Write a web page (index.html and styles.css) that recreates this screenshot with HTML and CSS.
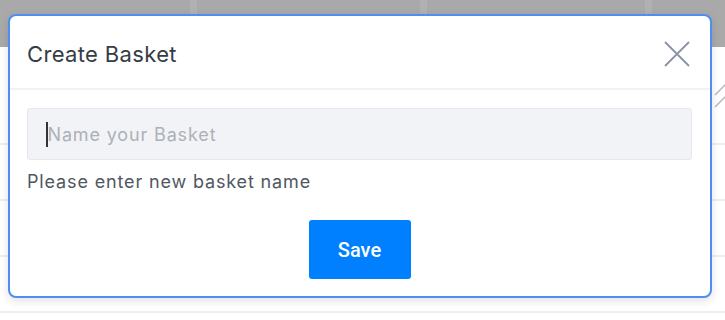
FILE: index.html
```html
<!DOCTYPE html>
<html>
<head>
<meta charset="utf-8">
<link rel="stylesheet" href="styles.css">
</head>
<body>
<div class="page">
  <div class="thead">
    <div class="th"></div>
    <div class="th"></div>
    <div class="th"></div>
    <div class="th"></div>
  </div>
  <div class="row row-first"><svg class="chev" width="20" height="30" viewBox="0 0 20 30"><path d="M2 12 L12 2 L22 12 M2 24 L12 14 L22 24" fill="none" stroke="#b5b9c0" stroke-width="1.5"/></svg></div>
  <div class="row"></div>
  <div class="row"></div>
  <div class="row"></div>
</div>

<div class="modal">
  <div class="modal-header">
    <h2 class="modal-title">Create Basket</h2>
    <button class="close" aria-label="Close">
      <svg width="28" height="28" viewBox="0 0 28 28"><path d="M2 2 L26 26 M26 2 L2 26" stroke="#8a93a3" stroke-width="1.8" fill="none"/></svg>
    </button>
  </div>
  <div class="modal-body">
    <div class="input"><span class="caret"></span><span class="placeholder">Name your Basket</span></div>
    <p class="help">Please enter new basket name</p>
    <div class="actions"><button class="save">Save</button></div>
  </div>
</div>
</body>
</html>
```

FILE: styles.css
```css
html, body {
  margin: 0;
  padding: 0;
  background: #fff;
  font-family: Inter, "Noto Sans", sans-serif;
}
.page {
  width: 725px;
  height: 320px;
  overflow: hidden;
}
.thead {
  display: flex;
  height: 47px;
  background: #a9a9a9;
}
.th {
  flex: 0 0 auto;
  border-right: 7px solid #b1b1b1;
}
.th:nth-child(1) { width: 190px; }
.th:nth-child(2) { width: 223px; }
.th:nth-child(3) { width: 218px; }
.th:nth-child(4) { flex: 1; border-right: 0; }
.row {
  height: 54px;
  border-bottom: 2px solid #eeeff1;
  position: relative;
}
.row-first { height: 96px; }
.chev {
  position: absolute;
  right: -8px;
  top: 36px;
}
.modal {
  position: absolute;
  left: 8px;
  top: 14px;
  width: 700px;
  height: 280px;
  background: #fff;
  border: 2px solid #4d8ff0;
  border-radius: 8px;
  box-shadow: 0 3px 10px rgba(0,0,0,0.12);
  display: flex;
  flex-direction: column;
}
.modal-header {
  height: 74px;
  border-bottom: 2px solid #f1f2f4;
  display: flex;
  align-items: center;
  justify-content: space-between;
  padding: 3px 19px 0 17px;
  box-sizing: border-box;
}
.modal-title {
  margin: 0;
  font-size: 22px;
  font-weight: 400;
  color: #363c46;
  letter-spacing: 0.35px;
}
.close {
  border: 0;
  background: none;
  padding: 0;
  width: 28px;
  height: 28px;
  display: flex;
}
.modal-body {
  padding: 18px 18px 0 17px;
}
.input {
  height: 50px;
  background: #f2f3f6;
  border: 1px solid #e6e8ec;
  border-radius: 3px;
  display: flex;
  align-items: center;
  padding-left: 18px;
}
.caret {
  width: 1.5px;
  height: 25px;
  background: #333;
  margin-right: 0;
}
.placeholder {
  font-size: 18px;
  letter-spacing: 0.85px;
  color: #adb1b8;
}
.help {
  margin: 11px 0 0;
  font-size: 18px;
  letter-spacing: 0.85px;
  color: #505762;
}
.actions {
  display: flex;
  justify-content: center;
  margin-top: 28px;
}
.save {
  width: 102px;
  height: 59px;
  background: #0080ff;
  border: 0;
  border-radius: 3px;
  color: #fff;
  font-family: Roboto, sans-serif;
  font-weight: 500;
  font-size: 20px;
}
```
